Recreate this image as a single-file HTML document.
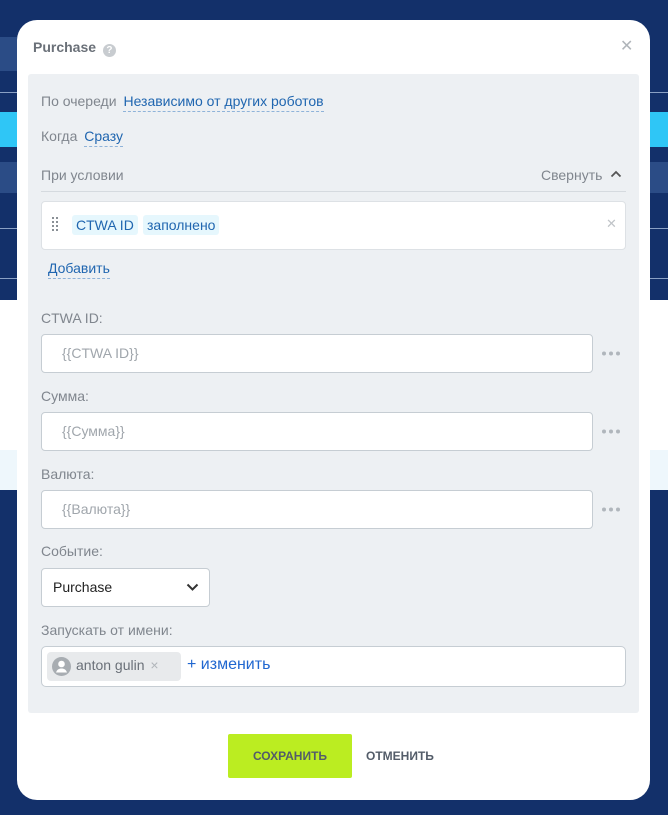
<!DOCTYPE html>
<html><head><meta charset="utf-8"><style>
*{box-sizing:border-box;margin:0;padding:0}
body{width:668px;height:815px;overflow:hidden;background:#13306a;font-family:"Liberation Sans","DejaVu Sans",sans-serif;position:relative;font-size:14px}
.a{position:absolute}
.lbl{position:absolute;left:41px;color:#80868e;font-size:14px}
.inp{position:absolute;left:41px;width:552px;height:39px;background:#fff;border:1px solid #c6cdd3;border-radius:4px;color:#a0a6ac;padding:10px 0 0 20px;font-size:14px}
.dots{position:absolute;left:601px}
.lnk{color:#2066b0;border-bottom:1px dashed #8fb3d9;padding-bottom:2px}
</style></head><body>
<div class="a" style="left:0;top:37px;width:17px;height:34px;background:#2b4c86"></div>
<div class="a" style="left:0;top:92px;width:668px;height:1px;background:#8aa0c4"></div>
<div class="a" style="left:0;top:112px;width:668px;height:35px;background:#2fc6f6"></div>
<div class="a" style="left:0;top:162px;width:668px;height:31px;background:#2b4c86"></div>
<div class="a" style="left:0;top:228px;width:668px;height:1px;background:#8aa0c4"></div>
<div class="a" style="left:0;top:278px;width:668px;height:1px;background:#8aa0c4"></div>
<div class="a" style="left:0;top:300px;width:668px;height:150px;background:#fff"></div>
<div class="a" style="left:0;top:450px;width:668px;height:40px;background:#eef7fc"></div>
<div class="a" style="left:17px;top:20px;width:633px;height:780px;background:#fff;border-radius:20px"></div>
<div class="a" style="left:33px;top:39px;font-size:14px;font-weight:bold;color:#6a7078">Purchase <span style="display:inline-block;width:13px;height:13px;border-radius:50%;background:#c8ccd0;color:#fff;font-size:10px;text-align:center;line-height:13px;vertical-align:-1px;margin-left:3px">?</span></div>
<div class="a" style="left:620px;top:36px;color:#b0b5ba;font-size:16px">✕</div>
<div class="a" style="left:28px;top:74px;width:611px;height:639px;background:#edf0f3;border-radius:3px"></div>
<div class="a" style="left:41px;top:93px;color:#80868e">По очереди <span class="lnk" style="margin-left:3px">Независимо от других роботов</span></div>
<div class="a" style="left:41px;top:128px;color:#80868e">Когда <span class="lnk" style="margin-left:3px">Сразу</span></div>
<div class="a" style="left:41px;top:167px;color:#80868e">При условии</div>
<div class="a" style="left:541px;top:167px;color:#80868e">Свернуть</div>
<svg class="a" style="left:610px;top:170px" width="12" height="8" viewBox="0 0 12 8"><path d="M1.5 6.5L6 2L10.5 6.5" stroke="#555" stroke-width="1.8" fill="none"/></svg>
<div class="a" style="left:41px;top:191px;width:585px;height:1px;background:#d5dadf"></div>
<div class="a" style="left:41px;top:201px;width:585px;height:49px;background:#fff;border:1px solid #dde1e5;border-radius:4px"></div>
<svg class="a" style="left:51px;top:216px" width="8" height="16" viewBox="0 0 8 16"><g fill="#8a9096"><rect x="1" y="1" width="2" height="2"/><rect x="5" y="1" width="2" height="2"/><rect x="1" y="5" width="2" height="2"/><rect x="5" y="5" width="2" height="2"/><rect x="1" y="9" width="2" height="2"/><rect x="5" y="9" width="2" height="2"/><rect x="1" y="13" width="2" height="2"/><rect x="5" y="13" width="2" height="2"/></g></svg>
<div class="a" style="left:72px;top:215px;background:#e6f7fd;color:#2066b0;padding:2px 4px;border-radius:3px">CTWA ID</div>
<div class="a" style="left:143px;top:215px;background:#e6f7fd;color:#2066b0;padding:2px 4px;border-radius:3px">заполнено</div>
<div class="a" style="left:606px;top:216px;color:#c0c4c8;font-size:13px">✕</div>
<div class="a" style="left:48px;top:260px"><span class="lnk">Добавить</span></div>
<div class="lbl" style="top:310px">CTWA ID:</div>
<div class="inp" style="top:334px">{{CTWA ID}}</div>
<svg class="dots" style="top:351px" width="20" height="5" viewBox="0 0 20 5"><g fill="#b0b6bc"><circle cx="3" cy="2.5" r="2"/><circle cx="10" cy="2.5" r="2"/><circle cx="17" cy="2.5" r="2"/></g></svg>
<div class="lbl" style="top:388px">Сумма:</div>
<div class="inp" style="top:412px">{{Сумма}}</div>
<svg class="dots" style="top:429px" width="20" height="5" viewBox="0 0 20 5"><g fill="#b0b6bc"><circle cx="3" cy="2.5" r="2"/><circle cx="10" cy="2.5" r="2"/><circle cx="17" cy="2.5" r="2"/></g></svg>
<div class="lbl" style="top:466px">Валюта:</div>
<div class="inp" style="top:490px">{{Валюта}}</div>
<svg class="dots" style="top:507px" width="20" height="5" viewBox="0 0 20 5"><g fill="#b0b6bc"><circle cx="3" cy="2.5" r="2"/><circle cx="10" cy="2.5" r="2"/><circle cx="17" cy="2.5" r="2"/></g></svg>
<div class="lbl" style="top:543px">Событие:</div>
<div class="a" style="left:41px;top:568px;width:169px;height:39px;background:#fff;border:1px solid #c6cdd3;border-radius:4px;color:#222;padding:10px 0 0 11px">Purchase
<svg class="a" style="left:144px;top:14px" width="13" height="9" viewBox="0 0 13 9"><path d="M1.5 1.5L6.5 6.5L11.5 1.5" stroke="#333" stroke-width="2" fill="none"/></svg></div>
<div class="lbl" style="top:622px">Запускать от имени:</div>
<div class="a" style="left:41px;top:646px;width:585px;height:41px;background:#fff;border:1px solid #c6cdd3;border-radius:5px"></div>
<div class="a" style="left:47px;top:652px;width:134px;height:29px;background:#e8eaec;border-radius:4px"></div>
<svg class="a" style="left:52px;top:657px" width="19" height="19" viewBox="0 0 19 19"><circle cx="9.5" cy="9.5" r="9.5" fill="#a8adb2"/><circle cx="9.5" cy="7" r="3.3" fill="#fff"/><path d="M4 15.5c1-3 3-4 5.5-4s4.5 1 5.5 4z" fill="#fff"/></svg>
<div class="a" style="left:76px;top:657px;color:#6a7078">anton gulin <span style="color:#b0b5ba;margin-left:2px">×</span></div>
<div class="a" style="left:187px;top:656px;color:#2067d0;font-size:16px">+ изменить</div>
<div class="a" style="left:228px;top:734px;width:124px;height:44px;background:#bbed21;border-radius:2px;color:#535c69;font-weight:bold;font-size:12px;text-align:center;line-height:44px">СОХРАНИТЬ</div>
<div class="a" style="left:366px;top:734px;color:#535c69;font-weight:bold;font-size:12px;line-height:44px">ОТМЕНИТЬ</div>
</body></html>
